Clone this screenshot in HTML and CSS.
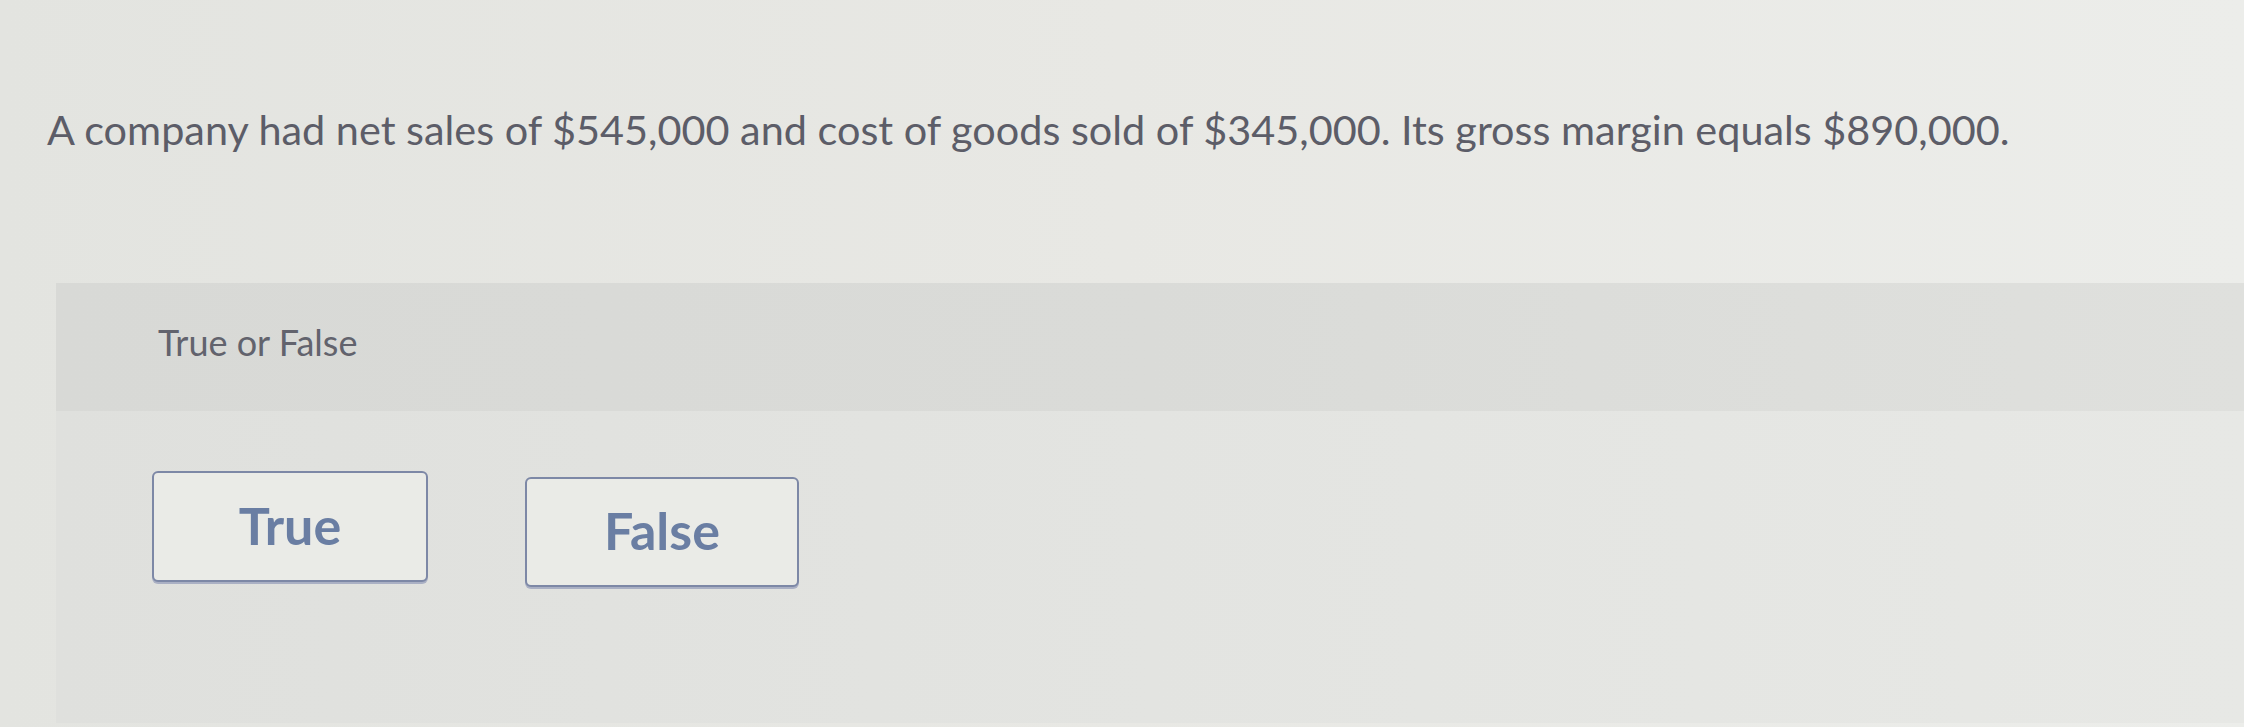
FILE: index.html
```html
<!DOCTYPE html>
<html lang="en">
<head>
<meta charset="utf-8">
<title>True or False</title>
<link rel="stylesheet" href="styles.css">
</head>
<body>
<div class="page">
  <p class="question">A company had net sales of $545,000 and cost of goods sold of $345,000. Its gross margin equals $890,000.</p>
  <section class="panel">
    <div class="panel-head">True or False</div>
    <div class="panel-body">
      <button class="choice">True</button>
      <button class="choice choice-false">False</button>
    </div>
  </section>
</div>
</body>
</html>
```

FILE: styles.css
```css
html, body {
  margin: 0;
  padding: 0;
  height: 100%;
}
body {
  background: linear-gradient(90deg, #e3e4e0 0%, #e8e8e4 50%, #ecedea 100%);
  font-family: Lato, "Open Sans", "Liberation Sans", sans-serif;
  overflow: hidden;
}
.page {
  display: flex;
  flex-direction: column;
  height: 727px;
}
.question {
  margin: 0;
  padding: 101px 0 0 47px;
  height: 182px;
  box-sizing: border-box;
  font-size: 41.4px;
  line-height: 56px;
  color: #5c5d68;
  white-space: nowrap;
}
.panel {
  margin-left: 56px;
  flex: 1;
  display: flex;
  flex-direction: column;
  background: linear-gradient(90deg, #dfe0dd 0%, #e3e4e1 50%, #e7e8e5 100%);
  margin-bottom: 4px;
  margin-top: 101px;
}
.panel-head {
  height: 128px;
  box-sizing: border-box;
  padding: 37px 0 0 102px;
  font-size: 36px;
  line-height: 44px;
  color: #62636d;
  background: linear-gradient(90deg, #d8d9d6 0%, #dadbd8 50%, #dfe0dd 100%);
}
.panel-body {
  display: flex;
  gap: 97px;
  padding: 60px 0 0 96px;
  align-items: flex-start;
}
.choice {
  width: 276px;
  height: 111px;
  box-sizing: border-box;
  border: 2px solid #7d88a6;
  border-radius: 6px;
  background: #eaebe7;
  color: #6a7ea3;
  font-family: inherit;
  font-size: 52px;
  font-weight: 700;
  line-height: 1;
  padding: 0 0 4px 0;
  box-shadow: 0 2px 0 #aab0c4;
}
.choice-false {
  margin-top: 6px;
  width: 274px;
  height: 110px;
}
```
